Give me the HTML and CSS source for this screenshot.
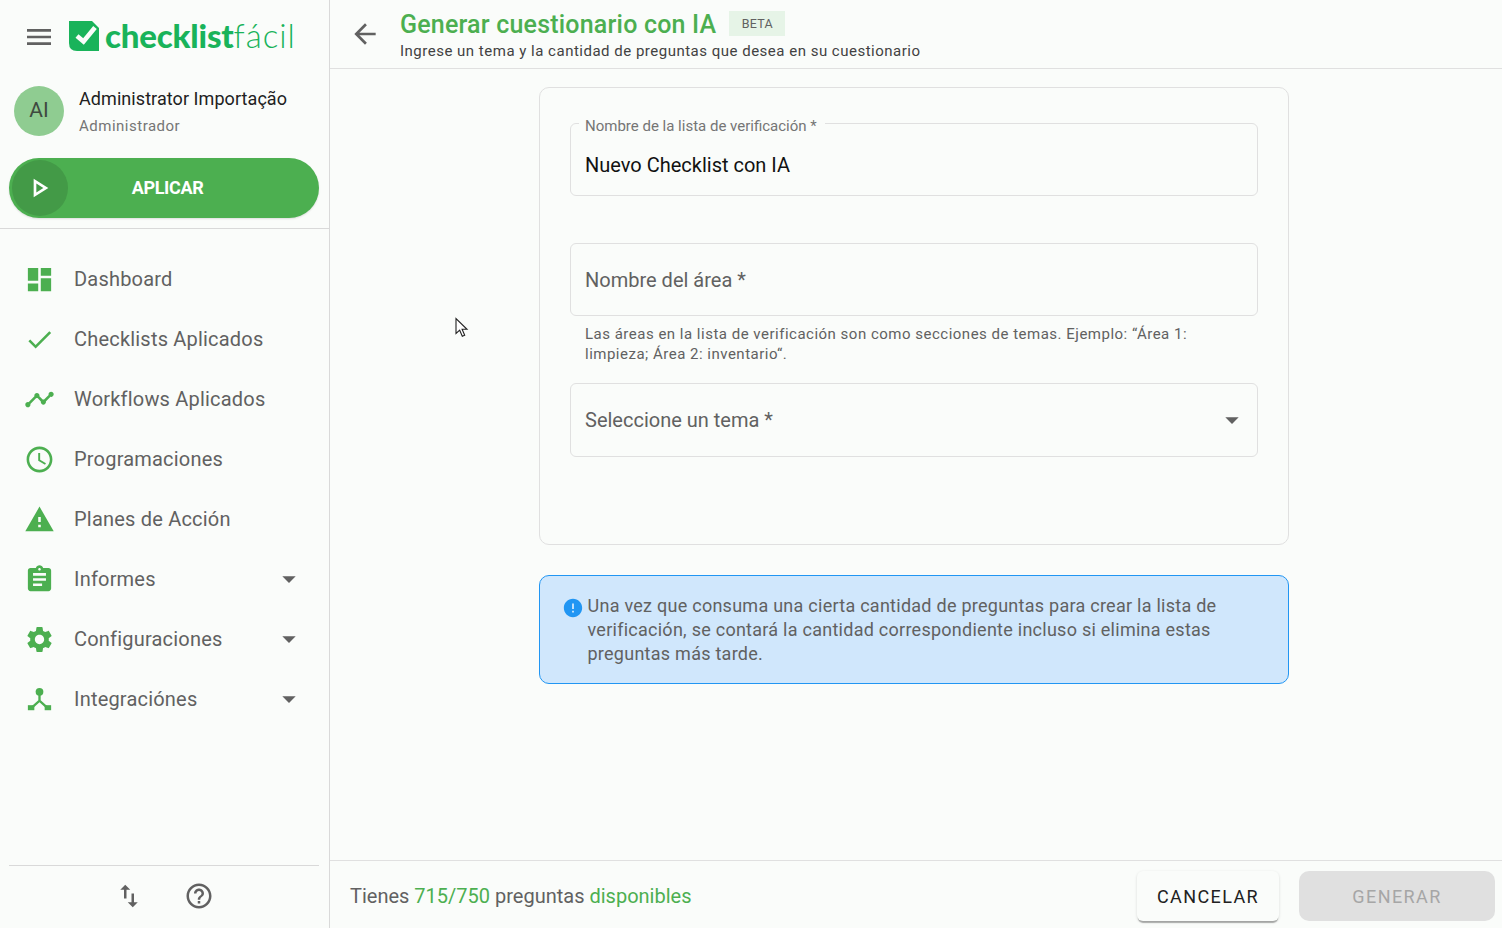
FILE: index.html
```html
<!DOCTYPE html>
<html lang="es">
<head>
<meta charset="utf-8">
<title>Generar cuestionario con IA</title>
<link rel="stylesheet" href="styles.css">
</head>
<body>
<div class="app">
  <aside class="sidebar">
    <div class="brand">
      <svg class="menu-icon" viewBox="0 0 24 24"><path d="M3 18h18v-2H3v2zm0-5h18v-2H3v2zm0-7v2h18V6H3z"/></svg>
      <svg class="logo-mark" viewBox="0 0 30 30"><path d="M0 0H23L30 7V30H8Q0 30 0 22Z" fill="#19b35a"/><path d="M8 15l6.5 5.5L26 6.5" fill="none" stroke="#fafcfa" stroke-width="4.6"/></svg>
      <div class="logo-text"><b>checklist</b><span>fácil</span></div>
    </div>
    <div class="profile">
      <div class="avatar">AI</div>
      <div class="profile-text">
        <div class="profile-name">Administrator Importação</div>
        <div class="profile-role">Administrador</div>
      </div>
    </div>
    <div class="apply-wrap">
      <button class="apply">
        <span class="apply-circle"><svg viewBox="0 0 24 24"><path d="M10 8.64L15.27 12 10 15.36V8.64M8 5v14l11-7L8 5z"/></svg></span>
        <span class="apply-label">APLICAR</span>
      </button>
    </div>
    <nav class="nav">
      <a class="nav-item"><svg class="nav-icon" viewBox="0 0 24 24"><path d="M3 13h8V3H3v10zm0 8h8v-6H3v6zm10 0h8V11h-8v10zm0-18v6h8V3h-8z"/></svg><span>Dashboard</span></a>
      <a class="nav-item"><svg class="nav-icon" viewBox="0 0 24 24"><path d="M9 16.17L4.83 12l-1.42 1.41L9 19 21 7l-1.41-1.41z"/></svg><span>Checklists Aplicados</span></a>
      <a class="nav-item"><svg class="nav-icon" viewBox="0 0 24 24"><path d="M23 8c0 1.1-.9 2-2 2-.18 0-.35-.02-.51-.07l-3.56 3.55c.05.16.07.34.07.52 0 1.1-.9 2-2 2s-2-.9-2-2c0-.18.02-.36.07-.52l-2.55-2.55c-.16.05-.34.07-.52.07s-.36-.02-.52-.07l-4.55 4.56c.05.16.07.33.07.51 0 1.1-.9 2-2 2s-2-.9-2-2 .9-2 2-2c.18 0 .35.02.51.07l4.56-4.55C8.02 9.36 8 9.18 8 9c0-1.1.9-2 2-2s2 .9 2 2c0 .18-.02.36-.07.52l2.55 2.55c.16-.05.34-.07.52-.07s.36.02.52.07l3.55-3.56C19.02 8.35 19 8.18 19 8c0-1.1.9-2 2-2s2 .9 2 2z"/></svg><span>Workflows Aplicados</span></a>
      <a class="nav-item"><svg class="nav-icon" viewBox="0 0 24 24"><path d="M11.99 2C6.47 2 2 6.48 2 12s4.47 10 9.99 10C17.52 22 22 17.52 22 12S17.52 2 11.99 2zM12 20c-4.42 0-8-3.58-8-8s3.58-8 8-8 8 3.58 8 8-3.58 8-8 8zm.5-13H11v6l5.25 3.15.75-1.23-4.5-2.67z"/></svg><span>Programaciones</span></a>
      <a class="nav-item"><svg class="nav-icon" viewBox="0 0 24 24"><path d="M1 21h22L12 2 1 21zm12-3h-2v-2h2v2zm0-4h-2v-4h2v4z"/></svg><span>Planes de Acción</span></a>
      <a class="nav-item"><svg class="nav-icon" viewBox="0 0 24 24"><path d="M19 3h-4.18C14.4 1.84 13.3 1 12 1c-1.3 0-2.4.84-2.82 2H5c-1.1 0-2 .9-2 2v14c0 1.1.9 2 2 2h14c1.1 0 2-.9 2-2V5c0-1.1-.9-2-2-2zm-7 0c.55 0 1 .45 1 1s-.45 1-1 1-1-.45-1-1 .45-1 1-1zm2 14H7v-2h7v2zm3-4H7v-2h10v2zm0-4H7V7h10v2z"/></svg><span>Informes</span><svg class="caret" viewBox="0 0 24 24"><path d="M7 10l5 5 5-5z"/></svg></a>
      <a class="nav-item"><svg class="nav-icon" viewBox="0 0 24 24"><path d="M19.14 12.94c.04-.3.06-.61.06-.94 0-.32-.02-.64-.07-.94l2.03-1.58c.18-.14.23-.41.12-.61l-1.92-3.32c-.12-.22-.37-.29-.59-.22l-2.39.96c-.5-.38-1.03-.7-1.62-.94l-.36-2.54c-.04-.24-.24-.41-.48-.41h-3.84c-.24 0-.43.17-.47.41l-.36 2.54c-.59.24-1.13.57-1.62.94l-2.39-.96c-.22-.08-.47 0-.59.22L2.74 8.87c-.12.21-.08.47.12.61l2.03 1.58c-.05.3-.09.63-.09.94s.02.64.07.94l-2.03 1.58c-.18.14-.23.41-.12.61l1.92 3.32c.12.22.37.29.59.22l2.39-.96c.5.38 1.03.7 1.62.94l.36 2.54c.05.24.24.41.48.41h3.84c.24 0 .44-.17.47-.41l.36-2.54c.59-.24 1.13-.56 1.62-.94l2.39.96c.22.08.47 0 .59-.22l1.92-3.32c.12-.22.07-.47-.12-.61l-2.01-1.58zM12 15.6c-1.98 0-3.6-1.62-3.6-3.6s1.62-3.6 3.6-3.6 3.6 1.62 3.6 3.6-1.62 3.6-3.6 3.6z"/></svg><span>Configuraciones</span><svg class="caret" viewBox="0 0 24 24"><path d="M7 10l5 5 5-5z"/></svg></a>
      <a class="nav-item"><svg class="nav-icon" viewBox="0 0 24 24"><circle cx="12" cy="6" r="3"/><rect x="3" y="16.4" width="5" height="3.9"/><rect x="16" y="16.4" width="5" height="3.9"/><path d="M11.1 7h1.8v5.6l5 4.4-1.2 1.3-4.7-4.2-4.7 4.2L6.1 17l5-4.4z"/></svg><span>Integraciónes</span><svg class="caret" viewBox="0 0 24 24"><path d="M7 10l5 5 5-5z"/></svg></a>
    </nav>
    <div class="side-foot">
      <svg class="foot-icon" viewBox="0 0 24 24"><path d="M16 17.01V10h-2v7.01h-3L15 21l4-3.99h-3zM9 3L5 6.99h3V14h2V6.99h3L9 3z"/></svg>
      <svg class="foot-icon" viewBox="0 0 24 24"><path d="M11 18h2v-2h-2v2zm1-16C6.48 2 2 6.48 2 12s4.48 10 10 10 10-4.48 10-10S17.52 2 12 2zm0 18c-4.41 0-8-3.59-8-8s3.59-8 8-8 8 3.59 8 8-3.59 8-8 8zm0-14c-2.21 0-4 1.79-4 4h2c0-1.1.9-2 2-2s2 .9 2 2c0 2-3 1.75-3 5h2c0-2.25 3-2.5 3-5 0-2.21-1.79-4-4-4z"/></svg>
    </div>
  </aside>
  <main class="main">
    <header class="topbar">
      <svg class="back" viewBox="0 0 24 24"><path d="M20 11H7.83l5.59-5.59L12 4l-8 8 8 8 1.41-1.41L7.83 13H20v-2z"/></svg>
      <div class="titles">
        <div class="title-row"><h1>Generar cuestionario con IA</h1><span class="beta">BETA</span></div>
        <p>Ingrese un tema y la cantidad de preguntas que desea en su cuestionario</p>
      </div>
    </header>
    <section class="content">
      <div class="column">
        <div class="card">
          <fieldset class="field filled">
            <legend>Nombre de la lista de verificación *</legend>
            <div class="value">Nuevo Checklist con IA</div>
          </fieldset>
          <div class="field plain area">Nombre del área *</div>
          <p class="helper">Las áreas en la lista de verificación son como secciones de temas. Ejemplo: “Área 1: limpieza; Área 2: inventario“.</p>
          <div class="field plain select"><span>Seleccione un tema *</span><svg viewBox="0 0 24 24"><path d="M7 10l5 5 5-5z"/></svg></div>
        </div>
        <div class="alert">
          <svg viewBox="0 0 24 24"><path d="M12 2C6.48 2 2 6.48 2 12s4.48 10 10 10 10-4.48 10-10S17.52 2 12 2zm1 15h-2v-2h2v2zm0-4h-2V7h2v6z"/></svg>
          <p>Una vez que consuma una cierta cantidad de preguntas para crear la lista de verificación, se contará la cantidad correspondiente incluso si elimina estas preguntas más tarde.</p>
        </div>
      </div>
      <svg class="cursor" viewBox="0 0 14 20"><path d="M1 1v15l3.7-3.3 2.6 6 2.4-1-2.6-5.9H12z" fill="#fff" stroke="#222" stroke-width="1.1"/></svg>
    </section>
    <footer class="footer">
      <p>Tienes <em>715/750</em> preguntas <em>disponibles</em></p>
      <div class="actions">
        <button class="btn cancel">CANCELAR</button>
        <button class="btn generate">GENERAR</button>
      </div>
    </footer>
  </main>
</div>
</body>
</html>
```

FILE: styles.css
```css
* { box-sizing: border-box; }
html, body { margin: 0; height: 100%; }
body {
  background: #fafcfa;
  color: #616161;
  font-family: Roboto, "Liberation Sans", sans-serif;
  overflow: hidden;
}
.app { display: flex; height: 928px; }

/* Sidebar */
.sidebar {
  width: 330px;
  flex: none;
  display: flex;
  flex-direction: column;
  border-right: 1px solid #d9d9d9;
}
.brand {
  height: 74px;
  display: flex;
  align-items: center;
  padding-left: 23px;
}
.menu-icon { width: 32px; height: 32px; fill: #616161; flex: none; }
.logo-mark { width: 30px; height: 30px; margin: -2px 0 0 14px; flex: none; }
.logo-text {
  font-family: Lato, Roboto, sans-serif;
  font-size: 33px;
  line-height: 40px;
  color: #19b35a;
  margin: -5px 0 0 6px;
  white-space: nowrap;
}
.logo-text b { font-weight: 900; letter-spacing: -0.2px; }
.logo-text span { font-weight: 300; letter-spacing: 1px; }
.profile {
  height: 50px;
  margin-top: 12px;
  padding-left: 14px;
  display: flex;
  align-items: center;
}
.avatar {
  width: 50px;
  height: 50px;
  padding-bottom: 2px;
  border-radius: 50%;
  background: #8fcc91;
  color: #3f4a3f;
  font-size: 21px;
  display: flex;
  align-items: center;
  justify-content: center;
  flex: none;
}
.profile-text { margin-left: 15px; padding-top: 2px; }
.profile-name { font-size: 18px; line-height: 24px; letter-spacing: 0.07px; color: #212121; margin-top: -1px; }
.profile-role { font-size: 15px; line-height: 20px; letter-spacing: 0.5px; color: #757575; margin-top: 5px; }
.apply-wrap {
  padding: 22px 10px 10px 9px;
  border-bottom: 1px solid #d9d9d9;
}
.apply {
  width: 310px;
  height: 60px;
  border: 0;
  padding: 0;
  border-radius: 30px;
  background: #4caf50;
  color: #fff;
  display: flex;
  align-items: center;
  position: relative;
  font-family: inherit;
  box-shadow: 0 1px 2px rgba(0,0,0,.12);
}
.apply-circle {
  width: 56px;
  height: 56px;
  margin-left: 3px;
  border-radius: 50%;
  background: #439a47;
  display: flex;
  align-items: center;
  justify-content: center;
}
.apply-circle svg { width: 32px; height: 32px; fill: #fff; margin-left: -3px; }
.apply-label {
  position: absolute;
  left: 0;
  right: 0;
  margin-left: 7px;
  padding-bottom: 2px;
  text-align: center;
  font-size: 18px;
  font-weight: 700;
  letter-spacing: -0.35px;
}
.nav { flex: 1; padding-top: 20px; }
.nav-item {
  height: 60px;
  display: flex;
  align-items: center;
  padding: 0 24px 0 23.5px;
  font-size: 20px;
  letter-spacing: 0.2px;
  color: #616161;
}
.nav-icon { width: 31px; height: 31px; fill: #4caf50; margin-right: 19.5px; flex: none; }
.nav-item span { flex: 1; }
.caret { width: 32px; height: 32px; fill: #616161; flex: none; }
.side-foot {
  margin: 0 10px 0 9px;
  height: 63px;
  padding-bottom: 2px;
  border-top: 1px solid #d9d9d9;
  display: flex;
  align-items: center;
  justify-content: center;
  gap: 40px;
}
.foot-icon { width: 30px; height: 30px; fill: #616161; }

/* Main */
.main { flex: 1; min-width: 0; display: flex; flex-direction: column; }
.topbar {
  height: 69px;
  flex: none;
  border-bottom: 1px solid #e0e0e0;
  display: flex;
  align-items: flex-start;
  padding-left: 19px;
}
.back { width: 32px; height: 32px; fill: #616161; margin-top: 18px; flex: none; }
.titles { margin-left: 19px; }
.title-row { display: flex; align-items: center; height: 29px; margin-top: 10px; }
h1 {
  margin: 0;
  font-size: 25px;
  line-height: 29px;
  font-weight: 500;
  letter-spacing: 0.2px;
  color: #4caf50;
}
.beta {
  margin-left: 13px;
  width: 56px;
  height: 25px;
  background: #e6f4e7;
  color: #616161;
  font-size: 12.5px;
  display: flex;
  align-items: center;
  justify-content: center;
  letter-spacing: 0.3px;
  margin-top: -2px;
}
.titles p {
  margin: 2px 0 0;
  font-size: 15px;
  line-height: 20px;
  letter-spacing: 0.5px;
  color: #424242;
}
.content {
  flex: 1;
  position: relative;
  display: flex;
  justify-content: center;
  padding: 18px 4px 0 0;
  min-height: 0;
}
.column { width: 750px; }
.card {
  height: 458px;
  border: 1px solid #e0e0e0;
  border-radius: 10px;
  padding: 24px 30px 0;
}
.field {
  border: 1px solid #e0e0e0;
  border-radius: 6px;
  margin: 0;
  width: 688px;
}
.filled {
  height: 84px;
  padding: 0 14px;
}
.filled legend {
  margin-left: -6px;
  padding: 6px 8px 0 6px;
  font-size: 15px;
  line-height: 17px;
  color: #757575;
}
.value {
  font-size: 20px;
  line-height: 24px;
  color: #111;
  margin-top: 18px;
}
.plain {
  display: flex;
  align-items: center;
  padding: 0 14px;
  font-size: 20px;
  color: #616161;
}
.area { height: 73px; margin-top: 47px; }
.helper {
  margin: 8px 0 0 15px;
  width: 650px;
  font-size: 15px;
  line-height: 20px;
  letter-spacing: 0.5px;
  color: #616161;
}
.select { height: 74px; margin-top: 19px; justify-content: space-between; padding-right: 9px; }
.select svg { width: 32px; height: 32px; fill: #616161; }
.alert {
  margin-top: 30px;
  height: 109px;
  border: 1px solid #2196f3;
  border-radius: 10px;
  background: #d0e7fc;
  padding: 18px 30px 0 22px;
  display: flex;
  align-items: flex-start;
}
.alert svg { width: 22px; height: 22px; fill: #2196f3; flex: none; margin: 3px 3.5px 0 0; }
.alert p {
  margin: 0;
  font-size: 18px;
  line-height: 24px;
  letter-spacing: 0.26px;
  color: #616161;
}
.cursor { position: absolute; left: 125px; top: 248px; width: 14px; height: 21px; }
.footer {
  height: 68px;
  flex: none;
  border-top: 1px solid #e0e0e0;
  display: flex;
  align-items: center;
  justify-content: space-between;
  padding: 0 7px 0 20px;
}
.footer p { margin: 2px 0 0; font-size: 20px; color: #616161; }
.footer em { font-style: normal; color: #4caf50; }
.actions { display: flex; gap: 20px; align-items: flex-start; padding-top: 2px; }
.btn {
  border: 0;
  font-family: inherit;
  font-size: 18px;
  font-weight: 400;
  letter-spacing: 1.4px;
  border-radius: 6px;
  height: 50px;
  padding: 2px 0 0;
}
.cancel {
  width: 142px;
  background: #fafcfa;
  color: #212121;
  box-shadow: 0 3px 1px -1px rgba(0,0,0,.28), 0 1px 3px rgba(0,0,0,.14);
}
.generate { width: 196px; background: #e0e0e0; color: #a6a6a6; border-radius: 10px; }
```
